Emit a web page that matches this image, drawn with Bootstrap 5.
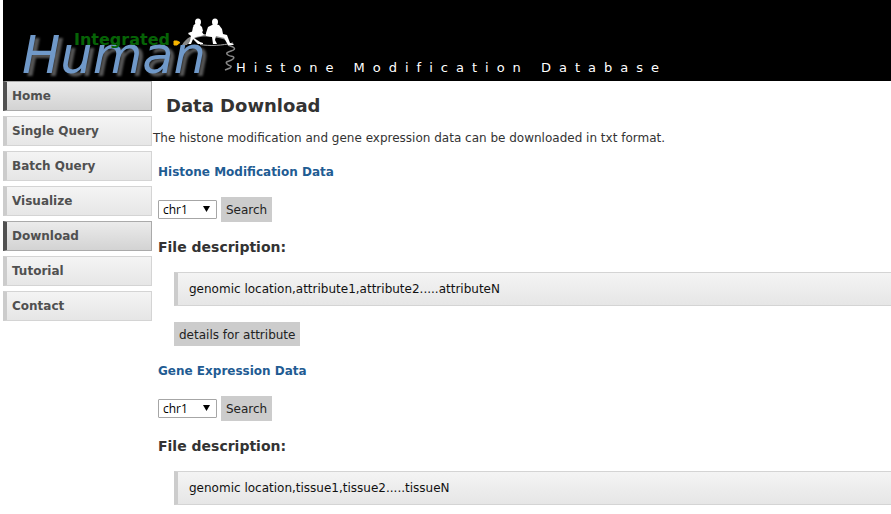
<!DOCTYPE html>
<html lang="en">
<head>
<meta charset="utf-8">
<meta name="viewport" content="width=device-width, initial-scale=1">
<title>Integrated Human Histone Modification Database</title>
<link rel="stylesheet" href="https://cdn.jsdelivr.net/npm/bootstrap@5.3.0/dist/css/bootstrap.min.css">
<style>
body { font-family: Verdana, "DejaVu Sans", sans-serif; font-size: 12px; line-height: 18px; color: #333; background: #fff; padding-left: 3px; }
.site-header { background: #000; height: 81px; }
.site-logo { display: block; font-family: "DejaVu Sans", sans-serif; }
.logo-human { font-size: 51px; font-style: italic; filter: drop-shadow(4px 3px 1px #555); }
.side-menu { width: 149px; gap: 5px; }
.side-menu .nav-link { height: 30px; padding: 5px; line-height: 18px; font-weight: bold; color: #505050; border: 1px solid #d4d4d4; border-left: 4px solid #ccc; background: linear-gradient(#f4f4f4, #e6e6e6); }
.side-menu .nav-link.active { color: #505050; border-color: #aaa; border-left-color: #505050; background: linear-gradient(#ebebeb, #d3d3d3); }
.content { padding: 13px 0 8px 1px; }
.page-title { font-size: 18px; line-height: 24px; font-weight: bold; margin: 0 0 11px 13px; }
.intro { margin: 0 0 16px; }
.download-set { padding-left: 5px; margin-bottom: 16px; }
.set-title { font-size: 12px; line-height: 18px; font-weight: bold; color: #1f5c93; margin: 0 0 16px; }
.file-title { font-size: 14px; line-height: 20px; font-weight: bold; margin: 15px 0; }
.chr-select { width: 59px; height: 19px; padding: 0 4px; font: 12px/17px "Open Sans", sans-serif; color: #000; border: 1px solid #a6a6a6; border-radius: 1px; appearance: none; background: #fff url("data:image/svg+xml,%3Csvg xmlns='http://www.w3.org/2000/svg' width='7' height='6'%3E%3Cpath d='M0 0h7L3.500 6z'/%3E%3C/svg%3E") no-repeat right 6px top 5px; }
.flat-btn { font-size: 12px; line-height: 17px; padding: 5px 5px 3px; border: 0; border-radius: 0; background: #ccc; color: #222; }
.details-btn { line-height: 16px; }
.format-box { margin: 0 0 16px 16px; padding: 7px 11px; border: 1px solid #d4d4d4; border-left: 4px solid #ccc; border-right: 0; background: linear-gradient(#f4f4f4, #e6e6e6); color: #111; }
</style>
<script src="https://cdn.jsdelivr.net/npm/bootstrap@5.3.0/dist/js/bootstrap.bundle.min.js" defer></script>
</head>
<body>
<header class="site-header overflow-hidden">
  <svg class="site-logo" width="680" height="81" viewBox="3 0 680 81" role="img" aria-label="Integrated Human Histone Modification Database">
    <text class="logo-human" x="22" y="73" fill="#7099c9">Human</text>
    <text x="74" y="45" font-size="16" font-weight="bold" fill="#066306">Integrated</text>
    <path d="M174 41h3l3 1.500-3 2.500h-3z" fill="#f7b500" stroke="#f7b500"/>
    <path d="M182 45C186 38 192 34.500 203 34c12-.5 20 2 25 7-6-3-15-4.500-25-4.500-8 1-12 3-16 8.500z" fill="#888"/>
    <path d="M200 44.500c10 1.800 22 1 33-1.500" fill="none" stroke="#aaa"/>
    <path d="M228 45l5 2c3 2 1 3-2 4s-6 2-3 4 8 1 5 4-9 2-6 5 6 1 3 4l-5 2" fill="none" stroke="#888" stroke-width="1.500"/>
    <g fill="#fff">
      <ellipse cx="198" cy="22" rx="3" ry="3.500"/><ellipse cx="215" cy="22" rx="3" ry="3.500"/>
      <path d="M195 24h4l3 3 1 4-1 1 2 3-3 1-5 1-2 1 6 4 3 1v1h-5l-5-5-2 5h-3l2-3 1-5-3-3 6-2 1-3-2-2z"/>
      <path d="M193 27l3-2 0 7-3 4-5-2 4-2z"/>
      <path d="M210 26l4-2 5 1 3 4 1 5 4 1 3 8 4 1-1 1h-5l-4-7-8-2-1 4 2 4h-4l-1-7-6-1v-3l2-6z"/>
    </g>
    <text x="236" y="72" font-size="13" letter-spacing="8" fill="#fff">Histone Modification Database</text>
  </svg>
</header>
<div class="d-flex align-items-start">
  <nav class="side-menu nav flex-column flex-nowrap flex-shrink-0" aria-label="Main">
    <a class="nav-link active" href="#">Home</a>
    <a class="nav-link" href="#">Single Query</a>
    <a class="nav-link" href="#">Batch Query</a>
    <a class="nav-link" href="#">Visualize</a>
    <a class="nav-link active" href="#" aria-current="page">Download</a>
    <a class="nav-link" href="#">Tutorial</a>
    <a class="nav-link" href="#">Contact</a>
  </nav>
  <main class="content flex-grow-1">
    <h1 class="page-title">Data Download</h1>
    <p class="intro">The histone modification and gene expression data can be downloaded in txt format.</p>
    <section class="download-set">
      <h2 class="set-title">Histone Modification Data</h2>
      <form class="d-flex align-items-center gap-1">
        <select class="chr-select" aria-label="Chromosome for histone modification data"><option>chr1</option></select>
        <button class="flat-btn" type="button">Search</button>
      </form>
      <h3 class="file-title">File description:</h3>
      <div class="format-box">genomic location,attribute1,attribute2.....attributeN</div>
      <button class="flat-btn details-btn d-block ms-3" type="button">details for attribute</button>
    </section>
    <section class="download-set mb-0">
      <h2 class="set-title">Gene Expression Data</h2>
      <form class="d-flex align-items-center gap-1">
        <select class="chr-select" aria-label="Chromosome for gene expression data"><option>chr1</option></select>
        <button class="flat-btn" type="button">Search</button>
      </form>
      <h3 class="file-title">File description:</h3>
      <div class="format-box mb-0">genomic location,tissue1,tissue2.....tissueN</div>
    </section>
  </main>
</div>
</body>
</html>
